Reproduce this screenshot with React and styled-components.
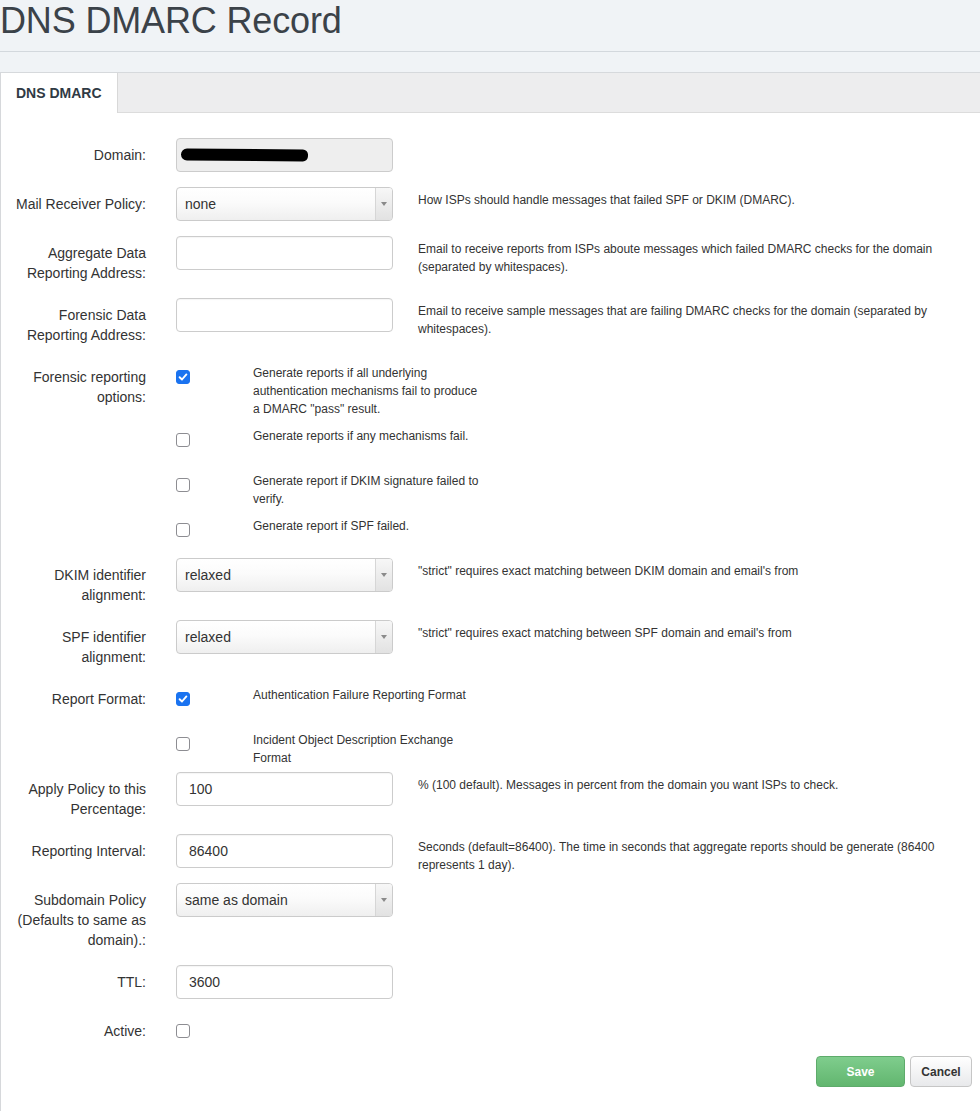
import React from 'react';
import styled, { createGlobalStyle, css } from 'styled-components';

const GlobalStyle = createGlobalStyle`
  body {
    margin: 0;
    background: #f0f3f6;
    font-family: "Liberation Sans", Arial, Helvetica, sans-serif;
    color: #333;
  }
`;

function CheckIcon() {
  return (
    <svg width="10" height="10" viewBox="0 0 10 10">
      <polyline points="1.6,5.2 4,7.5 8.4,2.4" fill="none" stroke="#fff" strokeWidth="1.9" strokeLinecap="round" strokeLinejoin="round" />
    </svg>
  );
}

function Select({ value }) {
  return (
    <SelectBox>
      <SelectValue>{value}</SelectValue>
      <Caret>
        <CaretArrow />
      </Caret>
    </SelectBox>
  );
}

function Checkbox({ checked }) {
  return <Box checked={checked}>{checked && <CheckIcon />}</Box>;
}

function CheckOptions({ options }) {
  return (
    <CheckList>
      {options.map((opt) => (
        <CheckItem key={opt.text}>
          <Checkbox checked={opt.checked} />
          <CheckText>{opt.text}</CheckText>
        </CheckItem>
      ))}
    </CheckList>
  );
}

const forensicOptions = [
  { text: 'Generate reports if all underlying authentication mechanisms fail to produce a DMARC "pass" result.', checked: true },
  { text: 'Generate reports if any mechanisms fail.', checked: false },
  { text: 'Generate report if DKIM signature failed to verify.', checked: false },
  { text: 'Generate report if SPF failed.', checked: false },
];

const formatOptions = [
  { text: 'Authentication Failure Reporting Format', checked: true },
  { text: 'Incident Object Description Exchange Format', checked: false },
];

export default function App() {
  return (
    <>
      <GlobalStyle />
      <PageHeader>
        <Title>DNS DMARC Record</Title>
      </PageHeader>
      <Panel>
        <TabBar>
          <Tab>DNS DMARC</Tab>
        </TabBar>
        <PanelBody>
          <Row>
            <Label>Domain:</Label>
            <Field>
              <DisabledInput>
                <Redacted />
              </DisabledInput>
            </Field>
          </Row>
          <Row>
            <Label>Mail Receiver Policy:</Label>
            <Field>
              <Select value="none" />
            </Field>
            <Help>How ISPs should handle messages that failed SPF or DKIM (DMARC).</Help>
          </Row>
          <Row>
            <Label>Aggregate Data Reporting Address:</Label>
            <Field>
              <TextInput />
            </Field>
            <Help>Email to receive reports from ISPs aboute messages which failed DMARC checks for the domain (separated by whitespaces).</Help>
          </Row>
          <Row>
            <Label>Forensic Data Reporting Address:</Label>
            <Field>
              <TextInput />
            </Field>
            <Help>Email to receive sample messages that are failing DMARC checks for the domain (separated by whitespaces).</Help>
          </Row>
          <Row tight>
            <Label>Forensic reporting options:</Label>
            <CheckOptions options={forensicOptions} />
          </Row>
          <Row>
            <Label>DKIM identifier alignment:</Label>
            <Field>
              <Select value="relaxed" />
            </Field>
            <Help>"strict" requires exact matching between DKIM domain and email's from</Help>
          </Row>
          <Row>
            <Label>SPF identifier alignment:</Label>
            <Field>
              <Select value="relaxed" />
            </Field>
            <Help>"strict" requires exact matching between SPF domain and email's from</Help>
          </Row>
          <Row tight>
            <Label>Report Format:</Label>
            <CheckOptions options={formatOptions} />
          </Row>
          <Row>
            <Label>Apply Policy to this Percentage:</Label>
            <Field>
              <TextInput defaultValue="100" />
            </Field>
            <Help>% (100 default). Messages in percent from the domain you want ISPs to check.</Help>
          </Row>
          <Row>
            <Label>Reporting Interval:</Label>
            <Field>
              <TextInput defaultValue="86400" />
            </Field>
            <Help>Seconds (default=86400). The time in seconds that aggregate reports should be generate (86400 represents 1 day).</Help>
          </Row>
          <Row>
            <Label>Subdomain Policy (Defaults to same as domain).:</Label>
            <Field>
              <Select value="same as domain" />
            </Field>
          </Row>
          <Row>
            <Label>TTL:</Label>
            <Field>
              <TextInput defaultValue="3600" />
            </Field>
          </Row>
          <Row>
            <Label>Active:</Label>
            <Field>
              <SingleCheck>
                <Checkbox checked={false} />
              </SingleCheck>
            </Field>
          </Row>
          <Actions>
            <Button type="button" primary>Save</Button>
            <Button type="button">Cancel</Button>
          </Actions>
        </PanelBody>
      </Panel>
    </>
  );
}

const PageHeader = styled.div`
  padding-top: 1px;
  height: 50px;
  border-bottom: 1px solid #d3d8dd;
  margin-bottom: 20px;
`;

const Title = styled.h1`
  margin: 0;
  font-size: 36px;
  line-height: 40px;
  font-weight: 400;
  color: #3b4249;
  letter-spacing: -0.15px;
`;

const Panel = styled.div`
  background: #fff;
  border-left: 1px solid #d6d8db;
  border-top: 1px solid #d6d9dc;
  min-height: 1038px;
`;

const TabBar = styled.div`
  display: flex;
  height: 39px;
  background: #ededee;
  border-bottom: 1px solid #dcdcdc;
`;

const Tab = styled.div`
  width: 101px;
  padding-left: 15px;
  margin-bottom: -1px;
  background: #fff;
  border-right: 1px solid #d8d8d8;
  font-size: 14px;
  font-weight: 700;
  line-height: 40px;
  color: #303a44;
`;

const PanelBody = styled.div`
  padding: 25px 8px 20px 0;
`;

const Row = styled.div`
  display: flex;
  align-items: flex-start;
  margin-bottom: ${({ tight }) => (tight ? '0' : '15px')};
`;

const Label = styled.div`
  flex: none;
  box-sizing: border-box;
  width: 145px;
  padding: 7px 0 0 5px;
  text-align: right;
  font-size: 14px;
  line-height: 20px;
  color: #333;
`;

const Field = styled.div`
  flex: none;
  width: 217px;
  margin-left: 30px;
`;

const Help = styled.div`
  width: 545px;
  margin: 0 0 -6px 25px;
  padding-top: 4px;
  font-size: 12px;
  line-height: 18px;
  color: #333;
`;

const controlBase = css`
  box-sizing: border-box;
  width: 100%;
  height: 34px;
  border: 1px solid #cccccc;
  border-radius: 4px;
  font-family: inherit;
  font-size: 14px;
  color: #333;
`;

const TextInput = styled.input`
  ${controlBase};
  display: block;
  padding: 0 12px;
  background: #fff;
  box-shadow: inset 0 1px 1px rgba(0, 0, 0, 0.04);
  outline: none;
`;

const DisabledInput = styled.div`
  ${controlBase};
  background: #eeeeee;
  padding: 10px 0 0 4px;
`;

const Redacted = styled.span`
  display: block;
  width: 127px;
  height: 12px;
  background: #000;
  border-radius: 7px 6px 6px 7px;
  transform: rotate(0.4deg);
`;

const SelectBox = styled.div`
  ${controlBase};
  display: flex;
  border-color: #cbcbcb;
  background: linear-gradient(#ffffff 0%, #fbfbfb 45%, #efefef 100%);
  overflow: hidden;
`;

const SelectValue = styled.div`
  flex: 1;
  padding-left: 8px;
  line-height: 32px;
`;

const Caret = styled.div`
  width: 16px;
  display: flex;
  align-items: center;
  justify-content: center;
  border-left: 1px solid #d6d6d6;
  background: linear-gradient(#f7f7f7, #e2e2e2);
`;

const CaretArrow = styled.span`
  width: 0;
  height: 0;
  margin-top: -1px;
  border-left: 3px solid transparent;
  border-right: 3px solid transparent;
  border-top: 4px solid #8a8a8a;
`;

const CheckList = styled.div`
  display: flex;
  flex-direction: column;
  gap: 9px;
  margin-left: 30px;
  padding: 4px 0 5px;
`;

const CheckItem = styled.div`
  display: flex;
  min-height: 36px;
`;

const Box = styled.span`
  flex: none;
  box-sizing: border-box;
  width: 14px;
  height: 14px;
  margin-top: 6px;
  display: flex;
  align-items: center;
  justify-content: center;
  border-radius: 3px;
  border: ${({ checked }) => (checked ? '1px solid #1a73f0' : '1.5px solid #8d8d92')};
  background: ${({ checked }) => (checked ? '#1a73f0' : '#fff')};
`;

const CheckText = styled.div`
  width: 234px;
  margin-left: 63px;
  font-size: 12px;
  line-height: 18px;
  color: #333;
`;

const SingleCheck = styled.div`
  padding-top: 4px;
`;

const Actions = styled.div`
  display: flex;
  justify-content: flex-end;
  gap: 5px;
`;

const Button = styled.button`
  box-sizing: border-box;
  height: 31px;
  width: ${({ primary }) => (primary ? '89px' : '62px')};
  border-radius: 4px;
  font-family: inherit;
  font-size: 12px;
  font-weight: 700;
  cursor: pointer;
  color: ${({ primary }) => (primary ? '#fff' : '#333')};
  border: 1px solid ${({ primary }) => (primary ? '#5eab6b' : '#c6c6c6')};
  background: ${({ primary }) =>
    primary ? 'linear-gradient(#7fcd8d, #62b66f)' : 'linear-gradient(#ffffff, #e8e9eb)'};
`;
